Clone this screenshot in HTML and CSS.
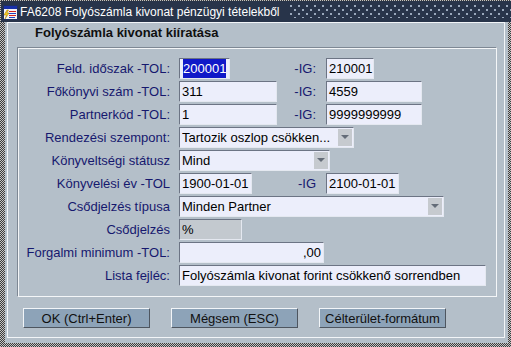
FILE: index.html
```html
<!DOCTYPE html>
<html lang="hu">
<head>
    <meta charset="UTF-8">
    <title>FA6208 Folyószámla kivonat</title>
    <link rel="stylesheet" href="styles.css">
</head>
<body>
    <div class="window">
        <div class="titlebar">
            <svg class="app-icon" width="15" height="15" viewBox="0 0 15 15">
                <rect x="0.5" y="0.5" width="14" height="14" fill="#f4f4f4" stroke="#203060"/>
                <rect x="1" y="1" width="13" height="3" fill="#1830a8"/>
                <rect x="6" y="6" width="7" height="1" fill="#d02020"/>
                <rect x="6" y="8" width="7" height="1" fill="#2040c0"/>
                <rect x="6" y="10" width="7" height="1" fill="#d02020"/>
                <rect x="6" y="12" width="6" height="1" fill="#2040c0"/>
                <path d="M4 5 L1 10 L3.5 10 L2 14 L6 8 L3.8 8 L5.5 5 Z" fill="#f8d020" stroke="#a07000" stroke-width="0.5"/>
            </svg>
            <span class="title">FA6208 Folyószámla kivonat pénzügyi tételekből</span>
            <span class="grip"></span>
        </div>

        <div class="frame">
            <div class="panel">
                <h1>Folyószámla kivonat kiíratása</h1>

                <div class="group">
                    <div class="row">
                        <span class="lbl">Feld. időszak -TOL:</span>
                        <span class="cell"><span class="field w51"><span class="sel">200001</span></span></span>
                        <span class="ig">-IG:</span>
                        <span class="field w48">210001</span>
                    </div>
                    <div class="row">
                        <span class="lbl">Főkönyvi szám -TOL:</span>
                        <span class="cell"><span class="field w98">311</span></span>
                        <span class="ig">-IG:</span>
                        <span class="field w96">4559</span>
                    </div>
                    <div class="row">
                        <span class="lbl">Partnerkód -TOL:</span>
                        <span class="cell"><span class="field w98">1</span></span>
                        <span class="ig">-IG:</span>
                        <span class="field w96">9999999999</span>
                    </div>
                    <div class="row">
                        <span class="lbl">Rendezési szempont:</span>
                        <span class="field select w175"><span class="val">Tartozik oszlop csökken...</span><span class="arrow"></span></span>
                    </div>
                    <div class="row">
                        <span class="lbl">Könyveltségi státusz</span>
                        <span class="field select w151"><span class="val">Mind</span><span class="arrow"></span></span>
                    </div>
                    <div class="row">
                        <span class="lbl">Könyvelési év -TOL</span>
                        <span class="cell"><span class="field w73">1900-01-01</span></span>
                        <span class="ig">-IG</span>
                        <span class="field w73">2100-01-01</span>
                    </div>
                    <div class="row">
                        <span class="lbl">Csődjelzés típusa</span>
                        <span class="field select w265"><span class="val">Minden Partner</span><span class="arrow"></span></span>
                    </div>
                    <div class="row">
                        <span class="lbl">Csődjelzés</span>
                        <span class="field disabled w63">%</span>
                    </div>
                    <div class="row">
                        <span class="lbl">Forgalmi minimum -TOL:</span>
                        <span class="field num w145">,00</span>
                    </div>
                    <div class="row">
                        <span class="lbl">Lista fejléc:</span>
                        <span class="field w307">Folyószámla kivonat forint csökkenő sorrendben</span>
                    </div>
                </div>

                <div class="actions">
                    <button class="btn">OK (Ctrl+Enter)</button>
                    <button class="btn">Mégsem (ESC)</button>
                    <button class="btn">Célterület-formátum</button>
                </div>
            </div>
        </div>
    </div>
</body>
</html>
```

FILE: styles.css
```css
body {
    margin: 0;
    font-family: "Liberation Sans", Arial, sans-serif;
    font-size: 13px;
    background: #ffffff;
}

.window {
    width: 511px;
    height: 347px;
    overflow: hidden;
    background: repeating-conic-gradient(#3c3c3c 0 25%, #c4c4c4 0 50%) 0 0 / 2px 2px;
}

.titlebar {
    display: flex;
    align-items: center;
    height: 21px;
    margin: 1px 0 0 1px;
    background: #28344a;
    color: #ffffff;
}

.app-icon {
    margin: 1px 2px 0 2px;
    flex: none;
}

.title {
    font-size: 12px;
    white-space: nowrap;
    padding-top: 1px;
}

.grip {
    flex: 1;
    align-self: stretch;
    margin: 4px 0 4px 11px;
    background-image:
        radial-gradient(circle at 1px 1px, #9aa8bc 0.9px, transparent 1.3px),
        radial-gradient(circle at 1px 1px, #9aa8bc 0.9px, transparent 1.3px);
    background-size: 8px 8px;
    background-position: 0 0, 4px 4px;
}

.frame {
    height: 321px;
    margin: 0 3px 0 5px;
    padding: 0 3px 5px 2px;
    box-sizing: border-box;
    background: #b4bfc9;
}

.panel {
    height: 316px;
    box-sizing: border-box;
    border: 1px solid #f2f5f8;
}

h1 {
    margin: 2px 0 0 27px;
    font-size: 13px;
    line-height: 16px;
    font-weight: bold;
    color: #101010;
}

.group {
    margin: 6px 7px 0 9px;
    padding: 10px 0;
    border: 1px solid;
    border-color: #7e8894 #f4f6f8 #f4f6f8 #7e8894;
    box-shadow: inset 1px 1px 0 #f4f6f8;
    display: flex;
    flex-direction: column;
    gap: 2px;
}

.row {
    display: flex;
    align-items: center;
    height: 21px;
}

.lbl {
    width: 152px;
    margin-right: 9px;
    text-align: right;
    color: #16186e;
    white-space: nowrap;
}

.cell {
    width: 98px;
    display: flex;
}

.ig {
    width: 39px;
    margin-right: 10px;
    text-align: right;
    color: #16186e;
}

.field {
    display: flex;
    align-items: center;
    height: 21px;
    box-sizing: border-box;
    padding: 0 2px;
    border: 1px solid;
    border-color: #6c7484 #e4e8f0 #e4e8f0 #6c7484;
    background: #eceefb;
    color: #000000;
    white-space: nowrap;
    line-height: 15px;
}

.sel {
    background: #1018c8;
    color: #ffffff;
    line-height: 19px;
    margin-left: 1px;
}

.field.select {
    padding-right: 1px;
}

.val {
    flex: 1;
    overflow: hidden;
}

.arrow {
    width: 14px;
    height: 17px;
    flex: none;
    background: #c6cacf;
    position: relative;
}

.arrow::after {
    content: "";
    position: absolute;
    left: 3px;
    top: 6px;
    border-left: 4px solid transparent;
    border-right: 4px solid transparent;
    border-top: 4px solid #646c78;
}

.field.disabled {
    background: #c3c9cf;
}

.field.num {
    justify-content: flex-end;
}

.w48 { width: 48px; }
.w51 { width: 51px; }
.w63 { width: 63px; }
.w73 { width: 73px; }
.w96 { width: 96px; }
.w98 { width: 98px; }
.w145 { width: 145px; }
.w151 { width: 151px; }
.w175 { width: 175px; }
.w265 { width: 265px; }
.w307 { width: 307px; }

.actions {
    display: flex;
    gap: 21px;
    margin: 11px 0 0 15px;
}

.btn {
    width: 127px;
    height: 20px;
    padding: 0;
    font-family: inherit;
    font-size: 13px;
    color: #101010;
    background: #8da3b8;
    border: 1px solid;
    border-color: #f2f5f8 #4e5660 #4e5660 #f2f5f8;
}
```
